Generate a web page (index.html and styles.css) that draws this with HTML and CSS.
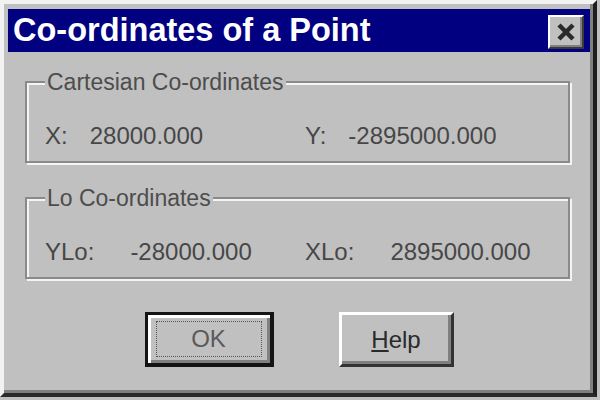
FILE: index.html
```html
<!DOCTYPE html>
<html lang="en">
  <head>
    <meta charset="UTF-8" />
    <meta name="viewport" content="width=device-width, initial-scale=1.0" />
    <title>Co-ordinates of a Point</title>
    <link rel="stylesheet" href="styles.css">
  </head>
  <body>
    <div class="window">
      <div class="titlebar">
        <span class="title">Co-ordinates of a Point</span>
        <button class="close" title="Close">
          <svg width="20" height="18" viewBox="0 0 20 18">
            <path d="M3 2 L17 16 M17 2 L3 16" stroke="#2a2a2a" stroke-width="4.5" fill="none" />
          </svg>
        </button>
      </div>

      <div class="group">
        <div class="group-title">Cartesian Co-ordinates</div>
        <div class="row cartesian">
          <div class="pair"><span>X:</span><span>28000.000</span></div>
          <div class="pair"><span>Y:</span><span>-2895000.000</span></div>
        </div>
      </div>

      <div class="group second">
        <div class="group-title">Lo Co-ordinates</div>
        <div class="row lo">
          <div class="pair"><span>YLo:</span><span>-28000.000</span></div>
          <div class="pair"><span>XLo:</span><span>2895000.000</span></div>
        </div>
      </div>

      <div class="buttons">
        <button class="btn default"><span class="focus">OK</span></button>
        <button class="btn"><u>H</u>elp</button>
      </div>
    </div>
  </body>
</html>
```

FILE: styles.css
```css
body {
  margin: 0;
  padding: 0;
  background-color: #c0c0c0;
  font-family: "Liberation Sans", Arial, sans-serif;
}

.window {
  width: 597px;
  height: 397px;
  box-sizing: border-box;
  background-color: #c0c0c0;
  border-style: solid;
  border-width: 4px;
  border-color: #f2f2f2 #1e1e1e #2a2a2a #f2f2f2;
  box-shadow: inset -3px -3px #808080;
  padding: 5px 3px 0 4px;
  color: #474747;
}

/* Title bar */
.titlebar {
  height: 43px;
  background-color: #000080;
  display: flex;
  align-items: center;
  justify-content: space-between;
  padding: 0 6px 0 5px;
}

.title {
  color: white;
  font-weight: bold;
  font-size: 32.5px;
  line-height: 1;
  white-space: nowrap;
}

.close {
  width: 36px;
  height: 34px;
  padding: 0;
  margin-top: 2px;
  background-color: #c0c0c0;
  border-style: solid;
  border-width: 2px;
  border-color: #ffffff #3a3a3a #3a3a3a #ffffff;
  box-shadow: inset -2px -2px #808080;
  display: flex;
  align-items: center;
  justify-content: center;
}

/* Group boxes */
.group {
  margin: 29px 20px 0 17px;
  padding: 0 10px 12px 18px;
  border: 2px solid #8a8a8a;
  box-shadow: inset 2px 2px #f4f4f4, 2px 2px #f4f4f4;
}

.group.second {
  margin-top: 34px;
}

.group-title {
  width: fit-content;
  margin: -14px 0 0 0;
  padding: 0 2px;
  background-color: #c0c0c0;
  font-size: 23px;
  line-height: 27px;
  color: #4d4d4d;
}

.row {
  display: grid;
  grid-template-columns: 260px 1fr;
  margin-top: 26px;
  font-size: 24px;
  line-height: 27px;
}

.pair {
  display: flex;
  gap: 22px;
}

.lo .pair {
  gap: 36px;
}

/* Buttons */
.buttons {
  display: flex;
  justify-content: center;
  gap: 65px;
  margin-top: 33px;
}

.btn {
  height: 55px;
  width: 115px;
  padding: 0;
  background-color: #c0c0c0;
  font-family: "Liberation Sans", Arial, sans-serif;
  font-size: 24px;
  color: #2a2a2a;
  border-style: solid;
  border-width: 3px;
  border-color: #ffffff #333333 #333333 #ffffff;
  box-shadow: inset -3px -3px #808080;
}

.btn.default {
  width: 129px;
  border-color: #141414;
  border-width: 3px 4px 4px 3px;
  box-shadow: inset 3px 3px #ffffff, inset -3px -3px #808080;
  color: #5a5a5a;
  display: flex;
  align-items: center;
  justify-content: center;
}

.focus {
  display: block;
  width: 104px;
  height: 34px;
  line-height: 34px;
  border: 1px dotted #555;
}
```
